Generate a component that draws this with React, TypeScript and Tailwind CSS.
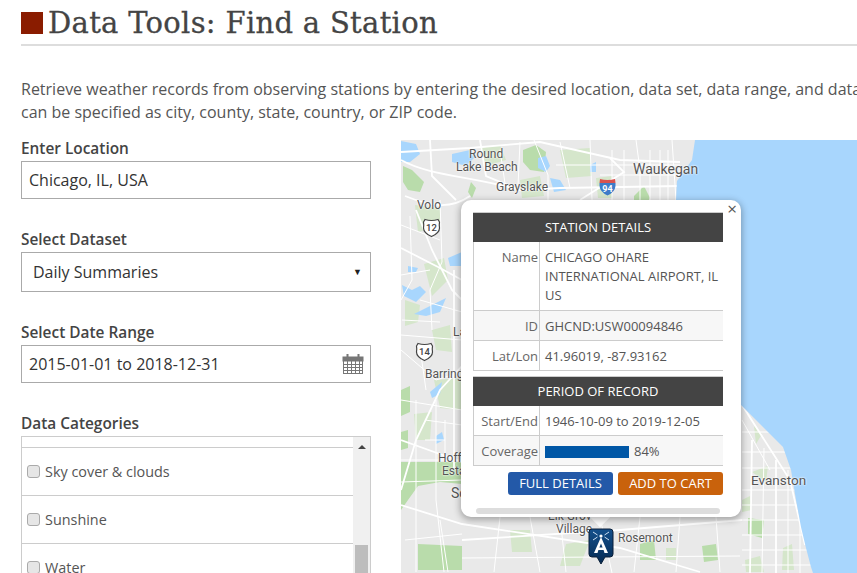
const greens = [
  "M403 166 L412 170 L424 182 L420 192 L408 190 L403 182Z",
  "M523 150 L536 145 L546 152 L544 172 L530 170 L523 162Z",
  "M471 182 L476 188 L472 198 L468 192Z",
  "M634 196 L644 186 L650 198 L642 212 L634 208Z",
  "M401 462 L462 462 L462 484 L440 482 L418 486 L408 500 L401 510Z",
  "M418 544 L462 546 L462 570 L418 570Z",
  "M401 390 L410 386 L410 412 L401 416Z",
  "M401 432 L408 430 L408 448 L401 450Z",
  "M748 518 L764 520 L762 538 L748 534Z",
  "M640 544 L654 540 L656 560 L640 560Z",
  "M702 546 L716 544 L718 560 L704 562Z",
];

const paleGreens = [
  "M480 148 L500 145 L506 160 L486 166Z",
  "M560 150 L590 148 L592 176 L566 178Z",
  "M520 180 L540 176 L544 196 L522 198Z",
  "M596 178 L612 176 L612 198 L598 198Z",
  "M415 205 L440 208 L440 226 L418 232Z",
  "M424 264 L444 258 L448 280 L432 296Z",
  "M405 300 L420 305 L418 322 L405 326Z",
  "M432 330 L450 325 L452 352 L436 350Z",
  "M434 380 L462 378 L462 410 L440 408Z",
  "M414 414 L432 412 L430 440 L416 440Z",
  "M754 426 L762 434 L756 444Z",
  "M752 472 L768 466 L766 482Z",
  "M783 548 L792 544 L794 570 L782 570Z",
  "M745 560 L760 556 L764 572 L746 572Z",
  "M742 500 L750 496 L752 510 L742 512Z",
  "M666 548 L676 548 L676 560 L666 560Z",
  "M510 530 L530 530 L532 552 L512 552Z",
  "M590 540 L580 566 L560 566 L566 544Z",
];

const lakes = [
  "M401 141 L416 144 L420 154 L410 162 L401 162Z",
  "M452 154 L470 150 L476 156 L466 166 L452 162Z",
  "M538 158 L546 156 L550 166 L546 172 L538 168Z",
  "M550 178 L560 180 L566 190 L554 192Z",
  "M408 266 L418 268 L416 272 L408 272Z",
  "M448 258 L462 252 L462 266 L450 266Z",
  "M402 285 L412 290 L420 286 L426 292 L416 302 L404 296Z",
  "M432 305 L446 298 L440 312 L426 316 L414 314Z",
  "M436 436 L442 432 L444 440 L436 444Z",
  "M430 392 L442 382 L440 394 L432 398Z",
  "M590 165 L596 162 L596 172 L590 172Z",
];

// main white roads
const roads = [
  "M401 160 C430 176 470 176 520 190 L560 188 L680 186",
  "M401 152 L470 148 L540 142 L620 160 L680 162",
  "M430 140 L432 176 L456 200",
  "M405 196 C430 206 450 210 470 196",
  "M480 140 L486 176 L520 190",
  "M610 158 L624 172 L580 200",
  "M401 248 L440 268 L462 280",
  "M416 210 L432 250 L452 290 L462 300",
  "M454 270 L454 470",
  "M401 440 L462 462",
  "M462 366 L440 390 L416 440 L401 490",
  "M401 505 L462 524 L620 548 L700 572",
  "M462 540 L620 530 L742 520",
  "M742 405 L790 480 L805 545",
  "M752 440 L750 573",
  "M776 460 L776 573",
];

// thin local streets
const streets = [
  "M534 140 L548 175 L548 200",
  "M636 140 L640 170 L640 200",
  "M660 150 L660 200",
  "M672 140 L676 200",
  "M556 165 L680 165",
  "M590 140 L592 200",
  "M612 150 L612 200",
  "M624 150 L624 200",
  "M650 150 L650 200",
  "M668 150 L668 200",
  "M600 175 L680 175",
  "M500 150 L506 190",
  "M520 142 L518 186",
  "M560 142 L570 188",
  "M410 216 L412 280 L401 300",
  "M440 200 L442 262 L430 290 L432 330",
  "M401 335 L462 340",
  "M401 400 L462 410",
  "M416 400 L416 572",
  "M436 400 L436 500 L444 572",
  "M401 460 L462 460",
  "M401 482 L462 480",
  "M405 540 L462 534",
  "M401 350 L436 380 L462 372",
  "M402 320 L440 322",
  "M420 348 L426 390",
  "M440 520 L448 572",
  "M401 225 L440 240",
  "M401 275 L430 270",
  "M420 300 L462 312",
  "M445 420 L445 462",
  "M425 420 L462 425",
  "M425 440 L445 440",
  "M500 517 L494 572",
  "M530 517 L540 572",
  "M560 517 L566 572",
  "M640 517 L634 572",
  "M680 517 L676 572",
  "M716 517 L720 572",
  "M462 558 L740 556",
  "M600 517 L612 573",
  "M742 432 L796 432",
  "M742 452 L792 452",
  "M742 468 L796 468",
  "M742 490 L800 490",
  "M742 505 L802 505",
  "M742 520 L806 520",
  "M742 535 L806 535",
  "M742 550 L810 550",
  "M742 565 L812 565",
  "M764 448 L762 573",
  "M788 470 L788 573",
  "M800 510 L800 573",
  "M742 420 L770 470",
];

const calendarLines = [4, 8, 12, 16];

function StationMarker() {
  return (
    <svg width="26" height="38" viewBox="0 0 26 38" className="absolute left-[187px] top-[388px]">
      <defs>
        <linearGradient id="pin" x1="0" y1="0" x2="0" y2="1">
          <stop offset="0" stopColor="#14508c" />
          <stop offset="1" stopColor="#052a52" />
        </linearGradient>
      </defs>
      <path d="M4 1 H22 Q25 1 25 4 V26 Q25 29 22 29 H17 L13 36 L9 29 H4 Q1 29 1 26 V4 Q1 1 4 1Z" fill="url(#pin)" stroke="#0a1f38" />
      <path d="M13 9 L20 25 H16.5 L15.6 22 H10.4 L9.5 25 H6 Z M13 15.5 L11.4 19.5 H14.6 Z" fill="#fff" />
      <circle cx="13" cy="8" r="1.6" fill="#fff" />
      <path d="M9.5 7 L5 4 M16.5 7 L21 4 M9.5 9 L5 12 M16.5 9 L21 12" stroke="#cfe2f5" strokeWidth="1" />
    </svg>
  );
}

function UsShield({ n, className }: { n: string; className: string }) {
  return (
    <svg width="19" height="20" viewBox="0 0 19 20" className={`absolute ${className}`}>
      <path d="M3 1.5 Q9.5 3.5 16 1.5 L17.5 4 Q17 7 17.5 10 Q17.5 15 9.5 18.5 Q1.5 15 1.5 10 Q2 7 1.5 4Z" fill="#fff" stroke="#444" strokeWidth="1.2" />
      <text x="9.5" y="13" textAnchor="middle" fontSize="9.5" fontWeight="500" fill="#444">{n}</text>
    </svg>
  );
}

function MapPanel() {
  const label = "absolute whitespace-nowrap leading-none text-[#555] [text-shadow:0_0_2px_#fff,0_0_2px_#fff]";
  return (
    <div className="relative flex-1 h-[433px] overflow-hidden bg-[#e9e9e9] font-['Roboto',sans-serif]">
      <svg viewBox="401 140 456 433" width="456" height="433" className="absolute inset-0 blur-[0.4px]">
        <rect x="401" y="140" width="456" height="433" fill="#e9e9e9" />
        {paleGreens.map((d, i) => <path key={i} d={d} fill="#d5e6cb" />)}
        {greens.map((d, i) => <path key={i} d={d} fill="#b9dcab" />)}
        {lakes.map((d, i) => <path key={i} d={d} fill="#a8d6fd" />)}
        {streets.map((d, i) => <path key={i} d={d} fill="none" stroke="#fff" strokeWidth={1} />)}
        {roads.map((d, i) => <path key={i} d={d} fill="none" stroke="#fff" strokeWidth={1.8} />)}
        <path d="M695 140 L692 160 L677 181 L676 200 L690 300 L741 405 L783 447 L791 470 L796 500 L801 527 L806 548 L811 567 L813 573 H857 V140Z" fill="#a8d6fd" />
      </svg>

      <span className={`${label} left-[68px] top-[8px] text-[12px]`}>Round</span>
      <span className={`${label} left-[55px] top-[21px] text-[12px]`}>Lake Beach</span>
      <span className={`${label} left-[95px] top-[41px] text-[12px]`}>Grayslake</span>
      <span className={`${label} left-[232px] top-[22px] text-[14px] text-[#444]`}>Waukegan</span>
      <span className={`${label} left-[16px] top-[59px] text-[12px]`}>Volo</span>
      <span className={`${label} left-[52px] top-[186px] text-[12px]`}>La</span>
      <span className={`${label} left-[24px] top-[228px] text-[12px]`}>Barring</span>
      <span className={`${label} left-[37px] top-[312px] text-[12px]`}>Hoff</span>
      <span className={`${label} left-[41px] top-[325px] text-[12px]`}>Esta</span>
      <span className={`${label} left-[50px] top-[346px] text-[14px]`}>Sc</span>
      <span className={`${label} left-[147px] top-[370px] text-[12px]`}>Elk Grove</span>
      <span className={`${label} left-[155px] top-[383px] text-[12px]`}>Village</span>
      <span className={`${label} left-[217px] top-[392px] text-[12px]`}>Rosemont</span>
      <span className={`${label} left-[350px] top-[334px] text-[13.5px] text-[#444]`}>Evanston</span>

      <UsShield n="12" className="left-[21px] top-[78px]" />
      <UsShield n="14" className="left-[14px] top-[202px]" />
      <svg width="17" height="18" viewBox="0 0 17 18" className="absolute left-[198px] top-[38px]">
        <path d="M1 1 Q8.5 3 16 1 L16.5 5 H0.5Z" fill="#d9534f" />
        <path d="M0.5 5 H16.5 V8 Q16 14 8.5 17.5 Q1 14 0.5 8Z" fill="#3d7cc9" />
        <text x="8.5" y="13.5" textAnchor="middle" fontSize="9" fontWeight="700" fill="#fff">94</text>
      </svg>

      <StationMarker />
      <StationPopup />
    </div>
  );
}

function Row({ name, alt, children, h }: { name: string; alt?: boolean; children: React.ReactNode; h: string }) {
  return (
    <div className={`flex border-b border-[#ccc] ${h} ${alt ? "bg-[#f7f7f7]" : "bg-white"}`}>
      <div className="w-[67px] shrink-0 border-l border-r border-[#ccc] pr-px pt-[6px] text-right font-medium text-[#666]">{name}</div>
      <div className="flex-1 pl-[5px] pt-[6px] text-[#555]">{children}</div>
    </div>
  );
}

function TableHead({ title }: { title: string }) {
  return (
    <div className="h-[30px] border-t border-[#ccc] bg-[#444] text-center text-[13px] leading-[29px] text-white">{title}</div>
  );
}

function StationPopup() {
  return (
    <>
      <div className="absolute left-[191px] top-[368px] w-[16px] h-[16px] rotate-45 bg-white" />
      <div className="absolute left-[60px] top-[60px] w-[280px] h-[317px] rounded-[10px] bg-white pl-[12px] pr-[18px] pt-[12px] shadow-[0_2px_7px_1px_rgba(0,0,0,0.3)] font-['Open_Sans',sans-serif] text-[13px] leading-[19px]">
        <button className="absolute right-[4px] top-0 text-[17px] leading-[18px] text-[#555]">×</button>
        <TableHead title="STATION DETAILS" />
        <Row name="Name" h="h-[69px]">
          CHICAGO OHARE<br />INTERNATIONAL AIRPORT, IL<br />US
        </Row>
        <Row name="ID" alt h="h-[30px]">GHCND:USW00094846</Row>
        <Row name="Lat/Lon" h="h-[30px]">41.96019, -87.93162</Row>
        <div className="mt-[5px]">
          <TableHead title="PERIOD OF RECORD" />
        </div>
        <Row name="Start/End" h="h-[30px]">1946-10-09 to 2019-12-05</Row>
        <Row name="Coverage" alt h="h-[30px]">
          <div className="flex items-center gap-[5px]">
            <div className="h-[12px] w-[84px] bg-[#0057a6]" />
            <span>84%</span>
          </div>
        </Row>
        <div className="mt-[6px] flex justify-end gap-[5px]">
          <button className="h-[23px] w-[105px] rounded-[3px] bg-[#2359a8] text-[13px] text-white">FULL DETAILS</button>
          <button className="h-[23px] w-[105px] rounded-[3px] bg-[#c9620c] text-[13px] text-white">ADD TO CART</button>
        </div>
        <div className="mx-[3px] mt-[13px] h-[6px] rounded-full bg-[#ddd]" />
      </div>
    </>
  );
}

function Categories() {
  const items = ["Sky cover & clouds", "Sunshine", "Water"];
  return (
    <div className="flex h-[200px] w-[350px] border border-[#ccc]">
      <div className="flex-1">
        <div className="h-[11px] border-b border-[#ccc]" />
        {items.map((t) => (
          <label key={t} className="flex h-[48px] items-center gap-[5px] border-b border-[#ccc] pl-[5px] text-[14.4px] text-[#555]">
            <input type="checkbox" className="h-[13px] w-[13px] appearance-none rounded-[3px] border border-[#aaa] bg-[#e6e6e6]" />
            {t}
          </label>
        ))}
      </div>
      <div className="relative w-[17px] bg-[#f0f0f0]">
        <div className="mx-auto mt-[8px] h-0 w-0 border-x-[4px] border-b-[4px] border-x-transparent border-b-[#444]" />
        <div className="absolute left-[2px] top-[108px] h-[90px] w-[13px] bg-[#bdbdbd]" />
      </div>
    </div>
  );
}

function CalendarIcon() {
  return (
    <svg width="22" height="20" viewBox="0 0 22 20" className="absolute right-[7px] top-[9px]" fill="none" stroke="#777">
      <rect x="1.5" y="3.5" width="19" height="16" fill="#fff" />
      <rect x="1" y="3" width="20" height="4" fill="#777" />
      <path d="M5.5 0 V5 M16.5 0 V5" strokeWidth="2" />
      {calendarLines.map((v) => (
        <path key={v} d={`M${1.5 + v} 7 V19.5`} strokeWidth="1" />
      ))}
      <path d="M1.5 10.5 H20.5 M1.5 13.5 H20.5 M1.5 16.5 H20.5" strokeWidth="1" />
    </svg>
  );
}

function FieldLabel({ children }: { children: React.ReactNode }) {
  return <label className="block pb-[4px] text-[15.4px] font-semibold leading-[17px] text-[#444]">{children}</label>;
}

export default function App() {
  return (
    <div className="h-[573px] w-[857px] overflow-hidden bg-white pl-[21px] font-['Open_Sans',sans-serif] text-[#555]">
      {/* titulo */}
      <div className="flex h-[46px] items-start gap-[5px] border-b-2 border-[#ddd]">
        <div className="mt-[12px] h-[22px] w-[22px] shrink-0 bg-[#8a1c00]" />
        <h1 className="whitespace-nowrap pt-[4px] font-['DejaVu_Serif',serif] text-[29px] leading-[38px] tracking-[0.3px] text-[#444] [-webkit-text-stroke:0.3px_#444]">Data Tools: Find a Station</h1>
      </div>

      <p className="mt-[32px] w-[900px] text-[16px] leading-[23px]">
        Retrieve weather records from observing stations by entering the desired location, data set, data range, and data<br />
        can be specified as city, county, state, country, or ZIP code.
      </p>

      <div className="mt-[16px] flex gap-[30px]">
        {/* formulario */}
        <div className="flex w-[350px] shrink-0 flex-col gap-[32px]">
          <div>
            <FieldLabel>Enter Location</FieldLabel>
            <input readOnly value="Chicago, IL, USA" className="block h-[38px] w-full border border-[#aaa] px-[7px] text-[16px] text-[#333]" />
          </div>

          <div>
            <FieldLabel>Select Dataset</FieldLabel>
            <div className="relative">
              <select className="block h-[40px] w-full appearance-none border border-[#aaa] bg-white pl-[11px] text-[16px] text-[#333]">
                <option>Daily Summaries</option>
              </select>
              <span className="absolute right-[9px] top-[13px] text-[9px] text-[#222]">▼</span>
            </div>
          </div>

          <div>
            <FieldLabel>Select Date Range</FieldLabel>
            <div className="relative">
              <input readOnly value="2015-01-01 to 2018-12-31" className="block h-[38px] w-full border border-[#aaa] px-[7px] text-[16px] text-[#333]" />
              <CalendarIcon />
            </div>
          </div>

          <div>
            <FieldLabel>Data Categories</FieldLabel>
            <Categories />
          </div>
        </div>

        <MapPanel />
      </div>
    </div>
  );
}
